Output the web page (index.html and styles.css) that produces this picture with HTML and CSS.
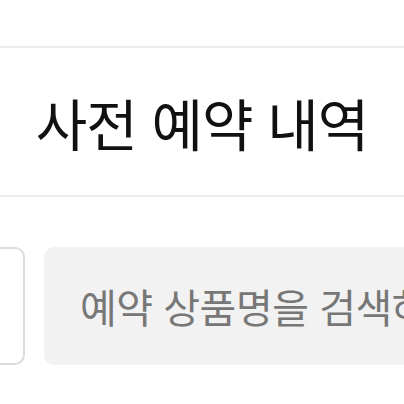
FILE: index.html
```html
<!DOCTYPE html>
<html lang="ko">
<head>
<meta charset="utf-8">
<link rel="stylesheet" href="styles.css">
</head>
<body>
<div class="top"></div>
<header class="title-bar">
  <h1 class="title">사전 예약 내역</h1>
</header>
<div class="search-row">
  <div class="filter-btn"></div>
  <div class="search-box"><span class="placeholder">예약 상품명을 검색하세요</span></div>
</div>
</body>
</html>
```
FILE: styles.css
```css
html, body {
  margin: 0;
  padding: 0;
  background: #ffffff;
  width: 404px;
  height: 404px;
  overflow: hidden;
  font-family: "Noto Sans CJK KR", "Noto Sans", sans-serif;
}
.top {
  height: 46px;
  border-bottom: 2px solid #ececec;
}
.title-bar {
  height: 147px;
  border-bottom: 2px solid #ececec;
  display: flex;
  align-items: center;
  justify-content: center;
}
.title {
  margin: 0;
  font-size: 56px;
  font-weight: 400;
  color: #111;
  white-space: nowrap;
  letter-spacing: -1px;
}
.search-row {
  display: flex;
  gap: 19px;
  padding-top: 50px;
  margin-left: -39px;
  width: 600px;
}
.filter-btn {
  flex: 0 0 60px;
  height: 114px;
  border: 2px solid #dcdcdc;
  border-radius: 10px;
  box-sizing: content-box;
}
.search-box {
  flex: 1;
  height: 118px;
  background: #f2f2f2;
  border-radius: 10px;
  display: flex;
  align-items: center;
  padding-left: 36px;
}
.placeholder {
  font-size: 40px;
  color: #777;
  white-space: nowrap;
  letter-spacing: -0.5px;
}
```
